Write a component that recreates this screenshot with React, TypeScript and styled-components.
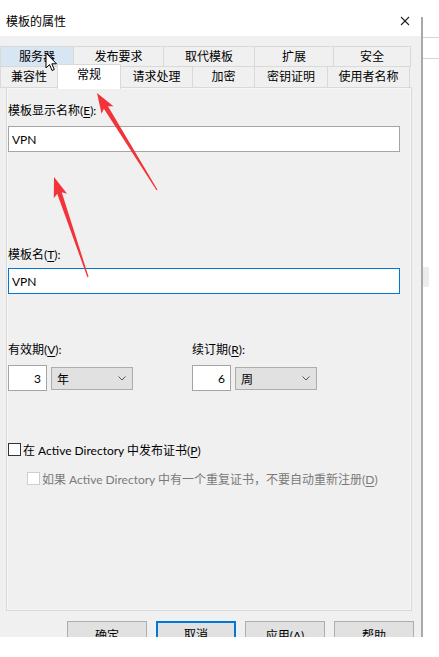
import React from "react";
import styled, { createGlobalStyle } from "styled-components";

const Global = createGlobalStyle`
  html, body { margin: 0; padding: 0; background: #ffffff; }
  body { width: 439px; height: 657px; overflow: hidden; }
  * { box-sizing: border-box; }
`;

const FONT = `"Lato", "Noto Sans CJK SC", sans-serif`;

const Page = styled.div`
  position: relative;
  width: 439px;
  height: 657px;
  display: flex;
  align-items: flex-start;
  font-family: ${FONT};
  font-size: 12px;
  color: #000;
`;

const Window = styled.div`
  width: 423px;
  height: 637px;
  display: flex;
  flex-direction: column;
`;

const TitleBar = styled.div`
  height: 36px;
  flex: none;
  display: flex;
  align-items: center;
  justify-content: space-between;
  padding: 0 11px 0 6px;
  background: #fff;
  border-right: 2px solid #a9a9a9;
  border-image: linear-gradient(to bottom, #fff 0, #fff 17px, #a9a9a9 17px) 1;
`;

const Title = styled.span`
  font-size: 12px;
  line-height: 16px;
  margin-top: 8px;
`;

const Body = styled.div`
  flex: 1;
  background: #f0f0f0;
  padding-top: 10px;
  overflow: hidden;
  border-right: 2px solid #a9a9a9;
`;

const TabRow = styled.div<{ $h: number }>`
  display: flex;
  height: ${(p) => p.$h}px;
`;

const Tab = styled.div<{ $w: number; $hover?: boolean; $active?: boolean }>`
  width: ${(p) => p.$w}px;
  flex: none;
  display: flex;
  align-items: center;
  justify-content: center;
  border: 1px solid #d9d9d9;
  margin-right: -1px;
  background: ${(p) => (p.$active ? "#ffffff" : p.$hover ? "#d8e6f4" : "#f0f0f0")};
  font-size: 12px;
  line-height: 16px;
  position: ${(p) => (p.$active ? "relative" : "static")};
  z-index: ${(p) => (p.$active ? 2 : "auto")};
  height: ${(p) => (p.$active ? "25px" : "auto")};
  margin-top: ${(p) => (p.$active ? "-2px" : "0")};
  border-bottom: ${(p) => (p.$active ? "none" : "1px solid #d9d9d9")};
  padding-bottom: ${(p) => (p.$active ? "4px" : "0")};
`;

const Panel = styled.div`
  margin-left: 6px;
  margin-top: -1px;
  width: 406px;
  height: 524px;
  border: 1px solid #d9d9d9;
  box-shadow: inset 0 0 0 1px #f7f7f7;
  background: #f0f0f0;
  padding: 15px 0 0 1px;
  display: flex;
  flex-direction: column;
`;

const Label = styled.div<{ $mt?: number }>`
  line-height: 16px;
  height: 16px;
  margin-top: ${(p) => p.$mt ?? 0}px;
`;

const U = styled.span`
  text-decoration: underline;
  text-underline-offset: 2px;
`;

const TextBox = styled.div<{ $focus?: boolean; $mt: number }>`
  width: 392px;
  height: 26px;
  margin-top: ${(p) => p.$mt}px;
  background: #fff;
  border: 1px solid ${(p) => (p.$focus ? "#0078d7" : "#a5a5a5")};
  display: flex;
  align-items: center;
  padding-left: 3px;
  font-size: 12px;
`;

const PeriodRow = styled.div`
  display: flex;
  margin-top: 48px;
`;

const PeriodGroup = styled.div<{ $w?: number }>`
  width: ${(p) => (p.$w ? `${p.$w}px` : "auto")};
  display: flex;
  flex-direction: column;
`;

const SpinRow = styled.div`
  display: flex;
  align-items: center;
  margin-top: 7px;
  gap: 4px;
`;

const NumBox = styled.div`
  width: 39px;
  height: 26px;
  background: #fff;
  border: 1px solid #a5a5a5;
  display: flex;
  align-items: center;
  justify-content: flex-end;
  padding-right: 5px;
`;

const Select = styled.div`
  width: 82px;
  height: 23px;
  background: #e1e1e1;
  border: 1px solid #adadad;
  display: flex;
  align-items: center;
  justify-content: space-between;
  padding: 0 6px 0 5px;
`;

const CheckRow = styled.div<{ $mt: number; $indent?: number; $disabled?: boolean }>`
  display: flex;
  align-items: center;
  height: 16px;
  margin-top: ${(p) => p.$mt}px;
  padding-left: ${(p) => p.$indent ?? 0}px;
  color: ${(p) => (p.$disabled ? "#7a7a7a" : "#000")};
  gap: 2px;
`;

const Box = styled.span<{ $disabled?: boolean }>`
  width: 13px;
  height: 13px;
  flex: none;
  background: #fff;
  border: 1px solid ${(p) => (p.$disabled ? "#cfcfcf" : "#333")};
`;

const ButtonRow = styled.div`
  display: flex;
  gap: 9px;
  padding-left: 67px;
  margin-top: 10px;
`;

const Button = styled.div<{ $focus?: boolean }>`
  width: 80px;
  height: 23px;
  background: #e1e1e1;
  border: ${(p) => (p.$focus ? "2px solid #0078d7" : "1px solid #adadad")};
  display: flex;
  align-items: center;
  justify-content: center;
  padding-top: ${(p) => (p.$focus ? "2px" : "3px")};
`;

const Outside = styled.div`
  flex: 1;
  height: 637px;
  display: flex;
  flex-direction: column;
`;

const OutLine = styled.div<{ $mt: number }>`
  height: 1px;
  background: #d4d4d4;
  margin-top: ${(p) => p.$mt}px;
`;

const OutBlock = styled.div`
  width: 6px;
  height: 20px;
  margin-top: 208px;
  background: #ececec;
`;

const Overlay = styled.svg`
  position: absolute;
  left: 0;
  top: 0;
  pointer-events: none;
`;

const Chevron = () => (
  <svg width="8" height="5" viewBox="0 0 8 5">
    <polyline points="0.5,0.5 4,4 7.5,0.5" fill="none" stroke="#555" strokeWidth="1" />
  </svg>
);

const CloseIcon = () => (
  <svg width="10" height="10" viewBox="0 0 10 10" style={{ marginTop: 6 }}>
    <line x1="1" y1="1" x2="9" y2="9" stroke="#222" strokeWidth="1.1" />
    <line x1="9" y1="1" x2="1" y2="9" stroke="#222" strokeWidth="1.1" />
  </svg>
);

function arrowPoints(tip: [number, number], tail: [number, number]) {
  const dx = tip[0] - tail[0];
  const dy = tip[1] - tail[1];
  const len = Math.hypot(dx, dy);
  const ux = dx / len;
  const uy = dy / len;
  const nx = -uy;
  const ny = ux;
  const headLen = 17;
  const neck: [number, number] = [tip[0] - ux * headLen, tip[1] - uy * headLen];
  const barb: [number, number] = [tip[0] - ux * (headLen + 3), tip[1] - uy * (headLen + 3)];
  const p = (b: [number, number], w: number) => `${b[0] + nx * w},${b[1] + ny * w}`;
  return [
    p(tail, 0.6),
    p(neck, 2.4),
    p(barb, 7),
    `${tip[0]},${tip[1]}`,
    p(barb, -7),
    p(neck, -2.4),
    p(tail, -0.6),
  ].join(" ");
}

const row1 = [
  { t: "服务器", w: 74, hover: true },
  { t: "发布要求", w: 91 },
  { t: "取代模板", w: 92 },
  { t: "扩展", w: 80 },
  { t: "安全", w: 78 },
];
const row2 = [
  { t: "兼容性", w: 58 },
  { t: "常规", w: 64, active: true },
  { t: "请求处理", w: 73 },
  { t: "加密", w: 63 },
  { t: "密钥证明", w: 74 },
  { t: "使用者名称", w: 83 },
];

export default function App() {
  return (
    <>
      <Global />
      <Page>
        <Window>
          <TitleBar>
            <Title>模板的属性</Title>
            <CloseIcon />
          </TitleBar>
          <Body>
            <TabRow $h={21}>
              {row1.map((r) => (
                <Tab key={r.t} $w={r.w} $hover={r.hover}>
                  {r.t}
                </Tab>
              ))}
            </TabRow>
            <TabRow $h={22} style={{ marginTop: -1 }}>
              {row2.map((r) => (
                <Tab key={r.t} $w={r.w} $active={r.active}>
                  {r.t}
                </Tab>
              ))}
            </TabRow>
            <Panel>
              <Label>
                模板显示名称(<U>E</U>):
              </Label>
              <TextBox $mt={7}>VPN</TextBox>
              <Label $mt={95}>
                模板名(<U>T</U>):
              </Label>
              <TextBox $mt={5} $focus>
                VPN
              </TextBox>
              <PeriodRow>
                <PeriodGroup $w={184}>
                  <Label>
                    有效期(<U>V</U>):
                  </Label>
                  <SpinRow>
                    <NumBox>3</NumBox>
                    <Select>
                      <span>年</span>
                      <Chevron />
                    </Select>
                  </SpinRow>
                </PeriodGroup>
                <PeriodGroup>
                  <Label>
                    续订期(<U>R</U>):
                  </Label>
                  <SpinRow>
                    <NumBox>6</NumBox>
                    <Select>
                      <span>周</span>
                      <Chevron />
                    </Select>
                  </SpinRow>
                </PeriodGroup>
              </PeriodRow>
              <CheckRow $mt={50}>
                <Box />
                <span>
                  在 Active Directory 中发布证书(<U>P</U>)
                </span>
              </CheckRow>
              <CheckRow $mt={13} $indent={19} $disabled>
                <Box $disabled />
                <span>
                  如果 Active Directory 中有一个重复证书，不要自动重新注册(<U>D</U>)
                </span>
              </CheckRow>
            </Panel>
            <ButtonRow>
              <Button>确定</Button>
              <Button $focus>取消</Button>
              <Button>应用(A)</Button>
              <Button>帮助</Button>
            </ButtonRow>
          </Body>
        </Window>
        <Outside>
          <OutLine $mt={37} />
          <OutLine $mt={20} />
          <OutBlock />
        </Outside>
        <Overlay width="439" height="657" viewBox="0 0 439 657">
          <polygon points={arrowPoints([97, 93], [157, 190])} fill="#f2333a" />
          <polygon points={arrowPoints([54, 177], [88, 277])} fill="#f2333a" />
          <path
            d="M46 53 L46 68 L49.5 64.5 L52 70.5 L54.3 69.5 L51.8 63.8 L56.5 63.8 Z"
            fill="#fff"
            stroke="#000"
            strokeWidth="1"
            strokeLinejoin="round"
          />
        </Overlay>
      </Page>
    </>
  );
}
